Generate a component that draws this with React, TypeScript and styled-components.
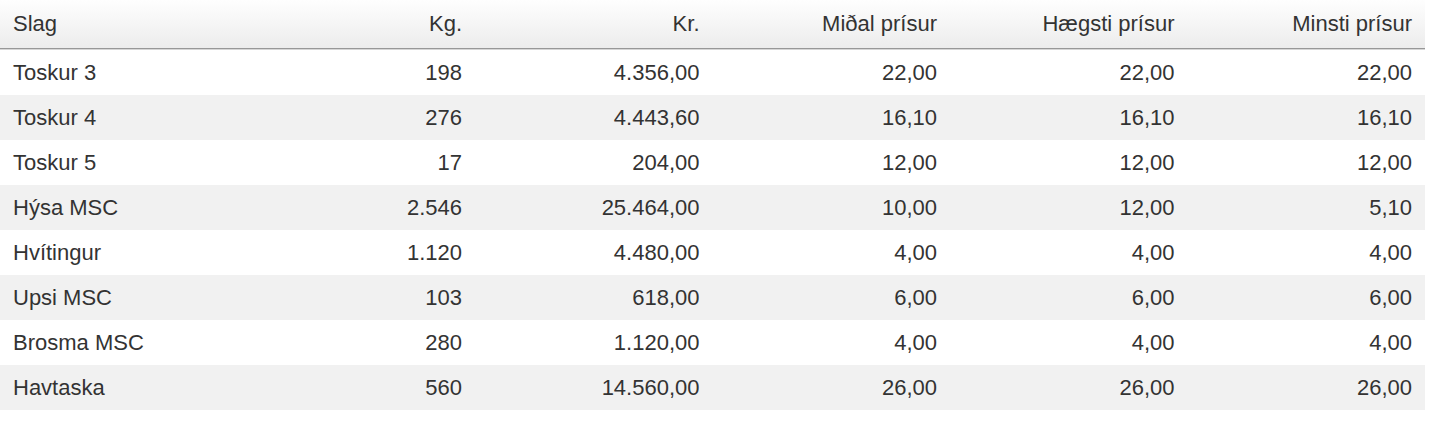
import React from 'react';
import styled, { createGlobalStyle } from 'styled-components';

const GlobalStyle = createGlobalStyle`
	body {
		margin: 0;
		background: #fff;
		font-family: "Liberation Sans", Arial, Helvetica, sans-serif;
		color: #333;
	}
`;

const Table = styled.div`
	width: 1425px;
	font-size: 22px;
`;

const HeadRow = styled.div`
	display: grid;
	grid-template-columns: repeat(6, 1fr);
	height: 48px;
	padding-bottom: 2px;
	align-items: center;
	background:
		linear-gradient(#979797, #979797) left bottom 1px / 100% 1px no-repeat,
		linear-gradient(#d6d6d6, #d6d6d6) left bottom / 100% 1px no-repeat,
		linear-gradient(to bottom, #fefefe 0%, #f6f6f6 45%, #ebebeb 100%);
`;

const Row = styled.div<{ $striped?: boolean }>`
	display: grid;
	grid-template-columns: repeat(6, 1fr);
	height: 45px;
	align-items: center;
	background: ${(p) => (p.$striped ? '#f1f1f1' : '#fff')};
`;

const Cell = styled.div<{ $left?: boolean }>`
	padding: 0 13px;
	text-align: ${(p) => (p.$left ? 'left' : 'right')};
	white-space: nowrap;
`;

const columns = ['Slag', 'Kg.', 'Kr.', 'Miðal prísur', 'Hægsti prísur', 'Minsti prísur'];

const rows = [
	['Toskur 3', '198', '4.356,00', '22,00', '22,00', '22,00'],
	['Toskur 4', '276', '4.443,60', '16,10', '16,10', '16,10'],
	['Toskur 5', '17', '204,00', '12,00', '12,00', '12,00'],
	['Hýsa MSC', '2.546', '25.464,00', '10,00', '12,00', '5,10'],
	['Hvítingur', '1.120', '4.480,00', '4,00', '4,00', '4,00'],
	['Upsi MSC', '103', '618,00', '6,00', '6,00', '6,00'],
	['Brosma MSC', '280', '1.120,00', '4,00', '4,00', '4,00'],
	['Havtaska', '560', '14.560,00', '26,00', '26,00', '26,00'],
];

export default function App() {
	return (
		<>
			<GlobalStyle />
			<Table>
				<HeadRow>
					{columns.map((c, i) => (
						<Cell key={c} $left={i === 0}>
							{c}
						</Cell>
					))}
				</HeadRow>
				{rows.map((r, ri) => (
					<Row key={r[0]} $striped={ri % 2 === 1}>
						{r.map((v, i) => (
							<Cell key={i} $left={i === 0}>
								{v}
							</Cell>
						))}
					</Row>
				))}
			</Table>
		</>
	);
}
